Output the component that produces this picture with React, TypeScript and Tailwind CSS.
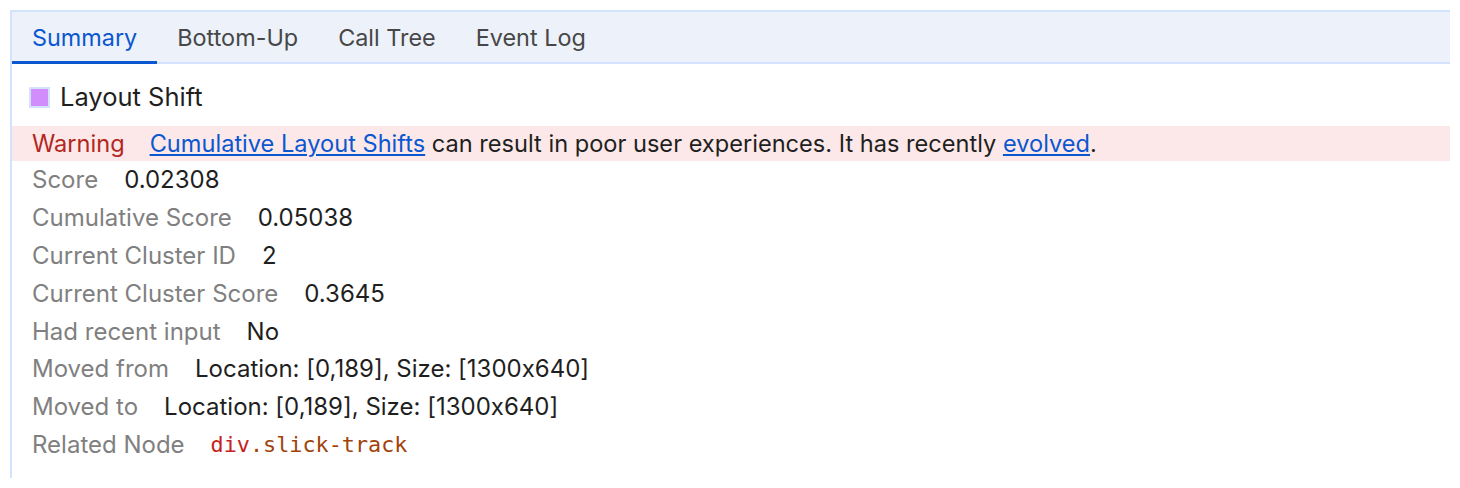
import React from 'react';

const tabs = ['Summary', 'Bottom-Up', 'Call Tree', 'Event Log'];

const rows: { label: string; value: string }[] = [
  { label: 'Score', value: '0.02308' },
  { label: 'Cumulative Score', value: '0.05038' },
  { label: 'Current Cluster ID', value: '2' },
  { label: 'Current Cluster Score', value: '0.3645' },
  { label: 'Had recent input', value: 'No' },
  { label: 'Moved from', value: 'Location: [0,189], Size: [1300x640]' },
  { label: 'Moved to', value: 'Location: [0,189], Size: [1300x640]' },
];

export default function App() {
  return (
    <div className="h-[488px] w-[1460px] bg-white pl-[10px] pr-[10px] pt-[10px] font-['Inter',sans-serif] text-[#1f1f1f] [font-feature-settings:'calt'_0]">
      <div className="h-[468px] border-l-2 border-[#d3e3fd]">
        {/* Tab strip */}
        <div className="flex h-[54px] border-y-2 border-[#d3e3fd] bg-[#edf2fa]">
          {tabs.map((tab, i) => (
            <div
              key={tab}
              className={`flex items-center px-5 pt-[3px] -mb-[2px] border-b-[3px] text-[23.4px] ${
                i === 0 ? 'border-[#0b57d0] text-[#0b57d0]' : 'border-transparent text-[#474747]'
              }`}
            >
              {tab}
            </div>
          ))}
        </div>

        {/* Title */}
        <div className="flex h-[62px] items-center pl-[17px] pt-[4px]">
          <span className="mr-[10px] h-[21px] w-[21px] border-2 border-[#d3e3fd] bg-[#d18dfc]" />
          <span className="text-[25.5px]">Layout Shift</span>
        </div>

        {/* Warning */}
        <div className="flex h-[35px] items-center bg-[#fce8e8] pl-5 text-[23.6px]">
          <span className="mr-[25px] text-[#b3261e]">Warning</span>
          <span>
            <a className="text-[#0b57d0] underline underline-offset-2">Cumulative Layout Shifts</a> can result in poor user
            experiences. It has recently <a className="text-[#0b57d0] underline underline-offset-2">evolved</a>.
          </span>
        </div>

        {/* Details */}
        {rows.map((r) => (
          <div key={r.label} className="flex h-[37.9px] items-center pl-5 text-[24px]">
            <span className="mr-[26px] text-[#808080]">{r.label}</span>
            <span>{r.value}</span>
          </div>
        ))}
        <div className="flex h-[37.9px] items-center pl-5 text-[24px]">
          <span className="mr-[26px] text-[#808080]">Related Node</span>
          <span className="font-['DejaVu_Sans_Mono',monospace] text-[21.8px]">
            <span className="text-[#c5221f]">div</span>
            <span className="text-[#a0430a]">.slick-track</span>
          </span>
        </div>
      </div>
    </div>
  );
}
